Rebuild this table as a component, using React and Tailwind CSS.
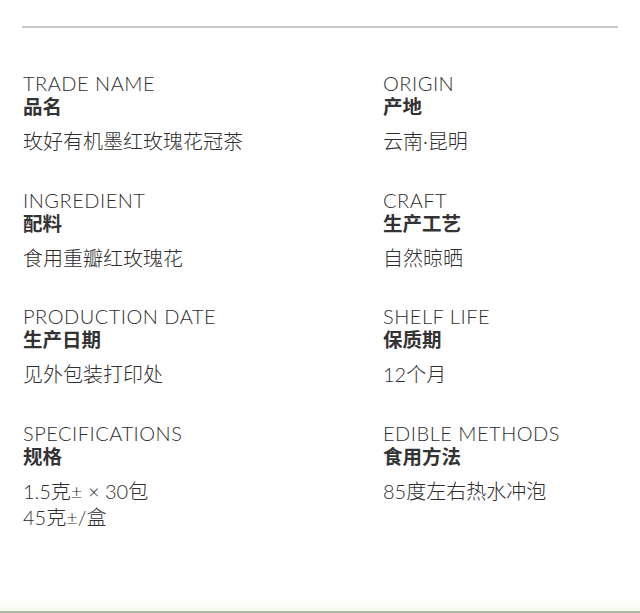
const items = [
  { en: 'TRADE NAME', zh: '品名', value: ['玫好有机墨红玫瑰花冠茶'] },
  { en: 'ORIGIN', zh: '产地', value: ['云南·昆明'] },
  { en: 'INGREDIENT', zh: '配料', value: ['食用重瓣红玫瑰花'] },
  { en: 'CRAFT', zh: '生产工艺', value: ['自然晾晒'] },
  { en: 'PRODUCTION DATE', zh: '生产日期', value: ['见外包装打印处'] },
  { en: 'SHELF LIFE', zh: '保质期', value: ['12个月'] },
  { en: 'SPECIFICATIONS', zh: '规格', value: ['1.5克± × 30包', '45克±/盒'] },
  { en: 'EDIBLE METHODS', zh: '食用方法', value: ['85度左右热水冲泡'] },
];

export default function App() {
  return (
    <div
      className="w-[640px] h-[613px] flex flex-col bg-white text-[#3d3d3d]"
      style={{ fontFamily: 'Lato, "Noto Sans CJK SC", sans-serif' }}
    >
      {/* top rule */}
      <div className="mx-[22px] mt-[26px] h-[2px] bg-[#c3c9c9]" />

      {/* info grid */}
      <div className="mt-[44px] pl-[23px] grid grid-cols-[360px_1fr] auto-rows-[116.5px]">
        {items.map((item) => (
          <div key={item.en}>
            <div className="text-[20px] leading-[22px] font-light text-[#2e2e2e] tracking-[0.5px]">{item.en}</div>
            <div className="text-[19.5px] leading-[26px] font-bold text-[#333333]">{item.zh}</div>
            <div className="mt-[8px] text-[20px] leading-[26px] font-light text-[#2e2e2e]">
              {item.value.map((line) => (
                <div key={line}>{line}</div>
              ))}
            </div>
          </div>
        ))}
      </div>

      {/* bottom band */}
      <div className="mt-auto h-[14px] bg-gradient-to-b from-white to-[#f6f8f0] border-b-2 border-[#aab9a3]" />
    </div>
  );
}
